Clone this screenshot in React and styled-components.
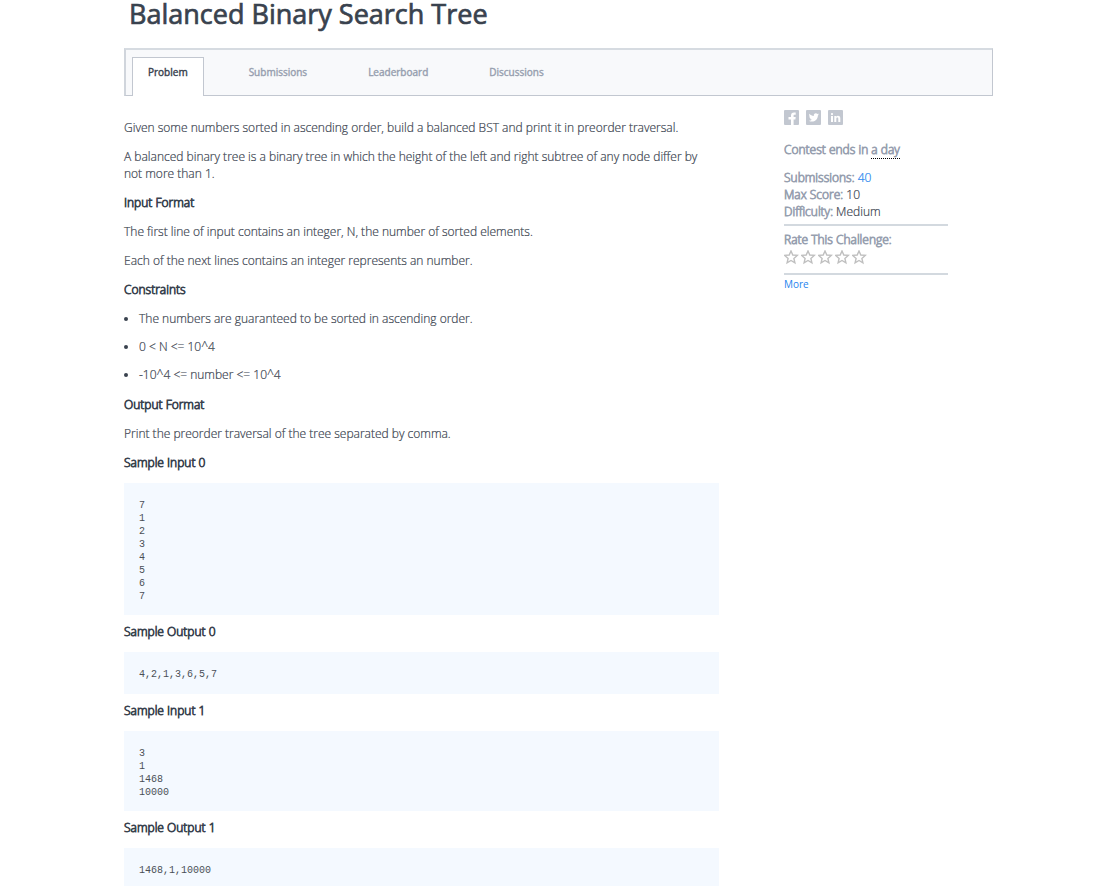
import React from "react";
import styled, { createGlobalStyle } from "styled-components";

const Global = createGlobalStyle`
  *, *::before, *::after { box-sizing: border-box; }
  body {
    margin: 0;
    background: #fff;
    color: #39424e;
    font: 300 12px/17px "Open Sans", "Noto Sans", sans-serif;
    -webkit-text-stroke: 0.2px currentColor;
  }
`;

const Page = styled.div`
  display: flow-root;
  padding: 0 115px 0 124px;
`;

const Title = styled.h1`
  margin: 0 0 20px 5px;
  font-size: 27px;
  line-height: 28px;
  font-weight: 400;
  -webkit-text-stroke: 0.7px #39424e;
`;

const TabBar = styled.nav`
  display: flex;
  gap: 29px;
  height: 48px;
  padding: 7px 0 0 6px;
  background: #f8f9fb;
  border: 1px solid #c2c7d0;
  border-width: 2px 1px 1px 2px;
  border-top-color: #d6dbe1;
  border-left-color: #d0d5dc;
`;

const Tab = styled.a`
  height: 39px;
  padding: 6px 15px 0;
  border: 1px solid transparent;
  border-bottom: 0;
  font-size: 10px;
  line-height: 17px;
  font-weight: 400;
  -webkit-text-stroke: 0.4px currentColor;
  text-decoration: none;
  color: ${(p) => (p.$active ? "#39424e" : "#979faf")};
  background: ${(p) => (p.$active ? "#fff" : "transparent")};
  border-color: ${(p) => (p.$active ? "#c2c7d0" : "transparent")};
`;

const Columns = styled.div`
  display: flex;
  align-items: flex-start;
`;

const Statement = styled.main`
  flex: 0 1 595px;
  min-width: 0;
  padding-top: 23px;
`;

const Text = styled.p`
  margin: 0 12px 12px 0;
`;

const Heading = styled.h2`
  margin: 0 0 12px;
  font-size: 12px;
  line-height: 17px;
  font-weight: 300;
  -webkit-text-stroke: 0.8px currentColor;
`;

const Bullets = styled.ul`
  display: grid;
  gap: 11px;
  margin: 0 0 13px;
  padding: 0 0 0 15px;
`;

const Code = styled.pre`
  margin: 0 0 8px;
  padding: 16px 15px 12px;
  min-height: 42px;
  background: #f4f9ff;
  color: #4a4f56;
  font: 10px/13px "Liberation Mono", monospace;
  -webkit-text-stroke: 0;
`;

const Sidebar = styled.aside`
  flex: 0 0 164px;
  margin-left: 65px;
  padding-top: 14px;
`;

const Social = styled.div`
  display: flex;
  gap: 6px;
  margin-bottom: 16px;
`;

const SocialLink = styled.a`
  display: block;
  width: 16px;
  height: 15px;
  svg { display: block; }
`;

const Ends = styled.p`
  margin: 0 0 11px;
`;

const Label = styled.span`
  color: #979faf;
  -webkit-text-stroke: 0.8px currentColor;
`;

const When = styled(Label)`
  border-bottom: 1px dotted #000;
`;

const Panel = styled.div`
  padding-bottom: 4px;
  margin-bottom: 5px;
  border-bottom: 2px solid #d3d9df;
`;

const RatingPanel = styled(Panel)`
  margin-bottom: 3px;
`;

const Link = styled.a`
  color: #1f84ee;
  text-decoration: none;
`;

const More = styled(Link)`
  font-size: 10px;
  line-height: 12px;
  font-weight: 400;
  display: block;
  -webkit-text-stroke: 0;
`;

const Stars = styled.div`
  display: flex;
  gap: 2px;
  height: 21px;
  padding-top: 2px;
`;

const Star = styled.button`
  width: 15px;
  height: 15px;
  padding: 0;
  border: 0;
  background: none;
  svg { display: block; }
`;

const tabs = ["Problem", "Submissions", "Leaderboard", "Discussions"];

const social = [
  ["Facebook", "M7 15V9.500H4.500V7H7V5.500C7 3.500 8 2.500 10 2.500h1.700v2.300h-1.200c-.7 0-.9.3-.9.900V7h2.100l-.3 2.500H9.600V15z"],
  ["Twitter", "M13 4.300c-.4.200-.8.300-1.200.300.400-.3.700-.7.900-1.100-.4.200-.8.400-1.300.500a2.100 2.100 0 0 0-3.600 1.900C6 5.800 4.500 5 3.500 3.700c-.6 1-.3 2.200.6 2.800-.3 0-.6-.1-.9-.3 0 1 .7 1.900 1.700 2.100-.3.100-.6.100-1 0 .3.800 1 1.400 2 1.500-.9.700-2 1-3.100.900 3.500 2.200 8.900.4 9.100-5.100.4-.3.800-.8 1.100-1.300z"],
  ["LinkedIn", "M3 6h2v6H3zM4 3a1.100 1.100 0 1 1 0 2.200A1.100 1.100 0 0 1 4 3zM6.300 6h1.900v.8c.9-1.500 4.100-1.300 4.100 1.500V12h-2V8.900c0-1.800-2-1.600-2 0V12h-2z"],
];

function Sample({ title, children }) {
  return (
    <section>
      <Heading>{title}</Heading>
      <Code>{children}</Code>
    </section>
  );
}

export default function App() {
  return (
    <Page>
      <Global />
      <Title>Balanced Binary Search Tree</Title>
      <TabBar>
        {tabs.map((name, i) => (
          <Tab key={name} href="#" $active={i === 0}>{name}</Tab>
        ))}
      </TabBar>
      <Columns>
        <Statement>
          <Text>Given some numbers sorted in ascending order, build a balanced BST and print it in preorder traversal.</Text>
          <Text>A balanced binary tree is a binary tree in which the height of the left and right subtree of any node differ by not more than 1.</Text>
          <Heading>Input Format</Heading>
          <Text>The first line of input contains an integer, N, the number of sorted elements.</Text>
          <Text>Each of the next lines contains an integer represents an number.</Text>
          <Heading>Constraints</Heading>
          <Bullets>
            <li>The numbers are guaranteed to be sorted in ascending order.</li>
            <li>{"0 < N <= 10^4"}</li>
            <li>{"-10^4 <= number <= 10^4"}</li>
          </Bullets>
          <Heading>Output Format</Heading>
          <Text>Print the preorder traversal of the tree separated by comma.</Text>
          <Sample title="Sample Input 0">{"7\n1\n2\n3\n4\n5\n6\n7"}</Sample>
          <Sample title="Sample Output 0">4,2,1,3,6,5,7</Sample>
          <Sample title="Sample Input 1">{"3\n1\n1468\n10000"}</Sample>
          <Sample title="Sample Output 1">1468,1,10000</Sample>
        </Statement>
        <Sidebar>
          <Social>
            {social.map(([name, d]) => (
              <SocialLink key={name} href="#" aria-label={name}>
                <svg width="16" height="15" viewBox="0 0 16 15">
                  <rect width="15" height="15" rx="1" fill="#c2c7d0" />
                  <path d={d} fill="#fff" />
                </svg>
              </SocialLink>
            ))}
          </Social>
          <Ends><Label>Contest ends in </Label><When>a day</When></Ends>
          <Panel>
            <div><Label>Submissions:</Label> <Link href="#">40</Link></div>
            <div><Label>Max Score:</Label> 10</div>
            <div><Label>Difficulty:</Label> Medium</div>
          </Panel>
          <RatingPanel>
            <Label>Rate This Challenge:</Label>
            <Stars>
              {[1, 2, 3, 4, 5].map((n) => (
                <Star key={n} aria-label={`${n} stars`}>
                  <svg width="15" height="15" viewBox="0 0 15 15">
                    <path d="M7 1l1.800 4 4.500.4-3.400 3 1 4.400L7 10.500l-3.900 2.300 1-4.400L.7 5.400 5.200 5z" fill="none" stroke="#bfbfbf" strokeWidth="1.400" />
                  </svg>
                </Star>
              ))}
            </Stars>
          </RatingPanel>
          <More href="#">More</More>
        </Sidebar>
      </Columns>
    </Page>
  );
}
